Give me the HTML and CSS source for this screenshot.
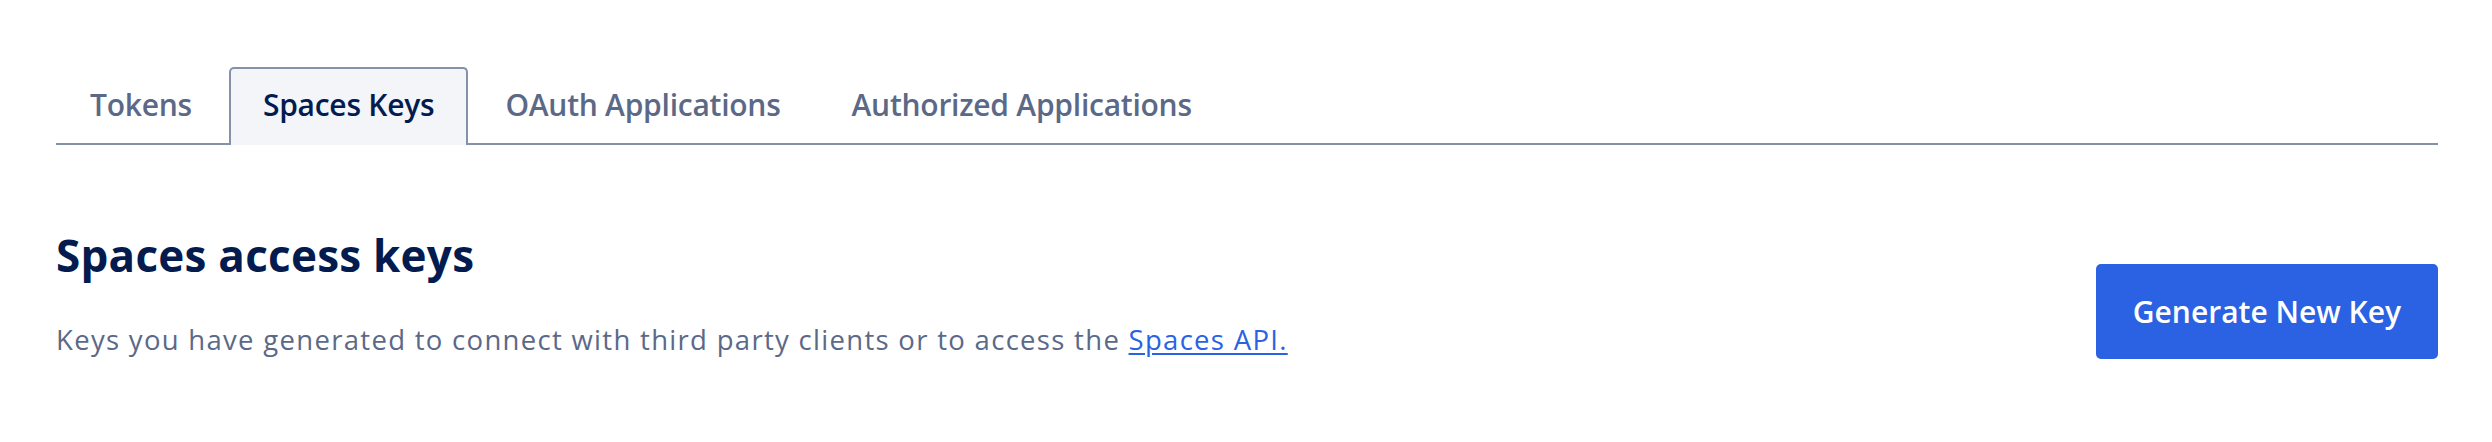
FILE: index.html
```html
<!DOCTYPE html>
<html lang="en">
<head>
<meta charset="utf-8">
<title>Spaces Keys</title>
<link rel="stylesheet" href="styles.css">
</head>
<body>
<div class="page">
  <nav class="tabs">
    <a class="tab">Tokens</a>
    <a class="tab tab-active">Spaces Keys</a>
    <a class="tab">OAuth Applications</a>
    <a class="tab">Authorized Applications</a>
  </nav>
  <section class="header">
    <div class="intro">
      <h2 class="title">Spaces access keys</h2>
      <p class="desc">Keys you have generated to connect with third party clients or to access the <a class="link" href="#">Spaces API.</a></p>
    </div>
    <button class="btn-primary" type="button">Generate New Key</button>
  </section>
</div>
</body>
</html>
```
FILE: styles.css
```css
html, body {
  margin: 0;
  background: #ffffff;
}
body {
  font-family: "Open Sans", Lato, sans-serif;
  color: #031b4e;
}
.page {
  padding: 67px 54px 0 56px;
}
.tabs {
  display: flex;
  gap: 3px;
  border-bottom: 2px solid #8591ab;
}
.tab {
  display: block;
  padding: 17px 32px 22px;
  margin-bottom: -2px;
  border: 2px solid transparent;
  border-bottom: 0;
  border-radius: 5px 5px 0 0;
  font-size: 30px;
  letter-spacing: -0.25px;
  line-height: 37px;
  font-weight: 600;
  color: #5b6987;
  cursor: pointer;
}
.tab-active {
  background: #f3f5f9;
  border-color: #8591ab;
  color: #031b4e;
}
.header {
  display: flex;
  justify-content: space-between;
  align-items: flex-start;
  padding-top: 84px;
}
.title {
  margin: 0;
  font-size: 44px;
  letter-spacing: 0.25px;
  line-height: 52px;
  font-weight: 700;
  color: #031b4e;
}
.desc {
  margin: 43px 0 0;
  font-size: 27.5px;
  letter-spacing: 1.3px;
  line-height: 32px;
  color: #5b6987;
}
.link {
  color: #2a62e3;
  text-decoration: underline;
  text-underline-offset: 3px;
}
.btn-primary {
  margin-top: 35px;
  height: 95px;
  padding: 0 37px;
  border: 0;
  border-radius: 5px;
  background: #2a62e3;
  color: #ffffff;
  font-family: "Open Sans", Lato, sans-serif;
  font-size: 30px;
  font-weight: 600;
  cursor: pointer;
}
```
